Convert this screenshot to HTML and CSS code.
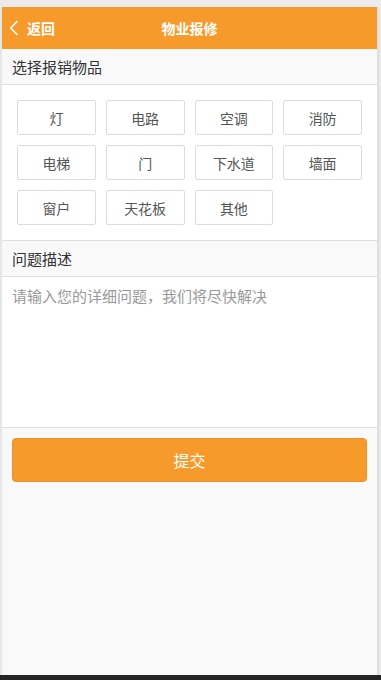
FILE: index.html
```html
<!DOCTYPE html>
<html lang="zh">
<head>
<meta charset="utf-8">
<title>物业报修</title>
<link rel="stylesheet" href="styles.css">
</head>
<body>
<div class="top-gap"></div>
<div class="frame">
  <div class="side-left"></div>
  <div class="app">
    <header class="header">
      <a class="back">
        <svg class="chev" width="10" height="16" viewBox="0 0 10 16"><path d="M8.5 1 L1.8 8 L8.5 15" fill="none" stroke="#fff" stroke-width="1.6"/></svg>
        <span>返回</span>
      </a>
      <h1 class="title">物业报修</h1>
    </header>
    <div class="sec-title">选择报销物品</div>
    <div class="items">
      <button class="item">灯</button>
      <button class="item">电路</button>
      <button class="item">空调</button>
      <button class="item">消防</button>
      <button class="item">电梯</button>
      <button class="item">门</button>
      <button class="item">下水道</button>
      <button class="item">墙面</button>
      <button class="item">窗户</button>
      <button class="item">天花板</button>
      <button class="item">其他</button>
    </div>
    <div class="sec-title">问题描述</div>
    <div class="desc">
      <textarea class="ta" placeholder="请输入您的详细问题，我们将尽快解决"></textarea>
    </div>
    <div class="actions">
      <button class="submit">提交</button>
    </div>
  </div>
  <div class="side-right"></div>
</div>
<div class="bottom-bar"></div>
</body>
</html>
```
FILE: styles.css
```css
html, body {
  margin: 0;
  padding: 0;
  height: 680px;
  overflow: hidden;
}
body {
  background: #e9e9e9;
  font-family: "Noto Sans CJK SC", "Noto Sans", sans-serif;
  display: flex;
  flex-direction: column;
}
.top-gap {
  height: 7px;
  background: #ececec;
  flex: none;
}
.frame {
  flex: 1;
  display: flex;
  min-height: 0;
}
.side-left {
  width: 2px;
  background: #e6e6e6;
  flex: none;
}
.side-right {
  flex: 1;
  background: linear-gradient(to right, #dcdcdc, #ececec);
}
.app {
  width: 375px;
  flex: none;
  background: #f9f9f9;
  display: flex;
  flex-direction: column;
}
.bottom-bar {
  height: 5px;
  background: #242424;
  flex: none;
}
.header {
  height: 42px;
  background: #f79a2c;
  position: relative;
  display: flex;
  align-items: center;
  justify-content: center;
  flex: none;
}
.back {
  position: absolute;
  left: 7px;
  top: 0;
  height: 42px;
  display: flex;
  align-items: center;
  gap: 8px;
  color: #fff;
  font-size: 14px;
  font-weight: bold;
}
.chev {
  display: block;
}
.title {
  margin: 0;
  color: #fff;
  font-size: 14px;
  font-weight: bold;
}
.sec-title {
  height: 35px;
  line-height: 35px;
  padding: 0 10px;
  font-size: 15px;
  color: #333;
  background: #f9f9f9;
  border-bottom: 1px solid #dedede;
  flex: none;
}
.items {
  background: #fff;
  padding: 15px 15px 15px;
  display: grid;
  grid-template-columns: repeat(4, 1fr);
  gap: 10px;
  border-bottom: 1px solid #dedede;
  flex: none;
}
.item {
  height: 35px;
  border: 1px solid #dcdcdc;
  border-radius: 2px;
  background: #fff;
  font-family: inherit;
  font-size: 14px;
  color: #555;
  padding: 0;
}
.desc {
  background: #fff;
  border-bottom: 1px solid #dedede;
  flex: none;
}
.ta {
  display: block;
  width: 100%;
  box-sizing: border-box;
  height: 150px;
  border: none;
  outline: none;
  resize: none;
  padding: 8px 10px;
  font-family: inherit;
  font-size: 15px;
  line-height: 22px;
  color: #333;
  background: #fff;
}
.ta::placeholder {
  color: #999;
}
.actions {
  padding: 10px 10px;
}
.submit {
  display: block;
  width: 100%;
  height: 44px;
  background: #f79a2c;
  border: 1px solid #ec9027;
  border-radius: 4px;
  color: #fff;
  font-family: inherit;
  font-size: 16px;
}
```
